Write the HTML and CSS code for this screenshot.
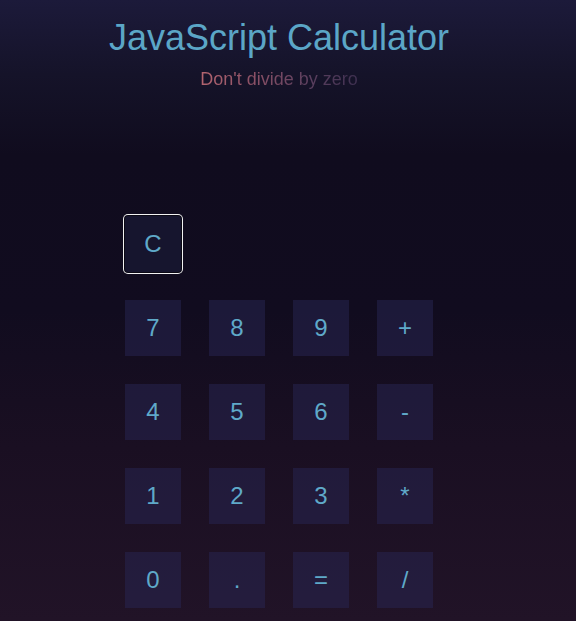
FILE: index.html
```html
<!DOCTYPE html>
<html lang="en">
<head>
<meta charset="utf-8">
<title>JavaScript Calculator</title>
<link rel="stylesheet" href="styles.css">
</head>
<body>
<main class="app">
  <h1 class="title">JavaScript Calculator</h1>
  <p class="subtitle">Don't divide by zero</p>
  <output class="display"></output>
  <div class="keypad">
    <button class="key key-clear">C</button>
    <span class="spacer"></span>
    <span class="spacer"></span>
    <span class="spacer"></span>
    <button class="key">7</button>
    <button class="key">8</button>
    <button class="key">9</button>
    <button class="key">+</button>
    <button class="key">4</button>
    <button class="key">5</button>
    <button class="key">6</button>
    <button class="key">-</button>
    <button class="key">1</button>
    <button class="key">2</button>
    <button class="key">3</button>
    <button class="key">*</button>
    <button class="key">0</button>
    <button class="key">.</button>
    <button class="key">=</button>
    <button class="key">/</button>
  </div>
</main>
</body>
</html>
```
FILE: styles.css
```css
html, body {
  margin: 0;
  padding: 0;
  height: 100%;
}
body {
  background: linear-gradient(180deg, #1c1a3a 0%, #151329 12%, #100c1e 25%, #110c1f 50%, #1a0f22 72%, #211327 100%);
  font-family: "Liberation Sans", Arial, sans-serif;
  overflow: hidden;
}
.app {
  width: 558px;
  display: flex;
  flex-direction: column;
  align-items: center;
}
.title {
  margin: 17px 0 0;
  font-size: 36px;
  font-weight: normal;
  line-height: normal;
  color: #5ba6c7;
}
.subtitle {
  margin: 10px 0 0;
  font-size: 18px;
  line-height: normal;
  background: linear-gradient(90deg, #b3646f 0%, #8a5066 35%, #5a3f5e 70%, #3e3050 100%);
  -webkit-background-clip: text;
  background-clip: text;
  color: transparent;
}
.display {
  display: block;
  height: 126px;
}
.keypad {
  display: grid;
  grid-template-columns: repeat(4, 56px);
  grid-auto-rows: 56px;
  gap: 28px;
}
.key {
  border: 0;
  padding: 0;
  margin: 0;
  background: rgba(40, 38, 84, 0.5);
  color: #5fa9c9;
  font-family: "Liberation Sans", Arial, sans-serif;
  font-size: 24px;
  display: flex;
  align-items: center;
  justify-content: center;
}
.key-clear {
  background: #16152e;
  border-radius: 3px;
  box-shadow: 0 0 0 1px #0b0914, 0 0 0 2px #f2f2f2;
}
```
